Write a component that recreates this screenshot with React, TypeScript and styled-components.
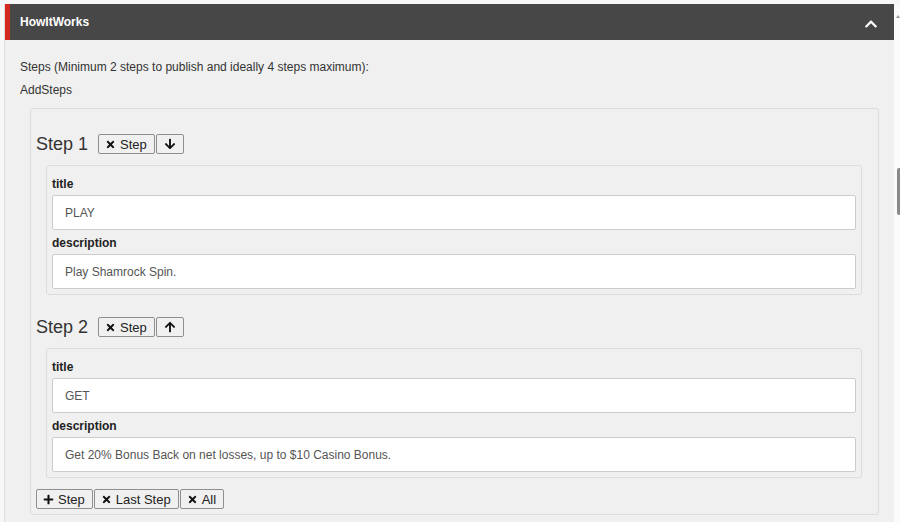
import React from "react";
import styled, { createGlobalStyle } from "styled-components";
import { FaTimes, FaArrowDown, FaArrowUp, FaPlus, FaChevronUp } from "react-icons/fa";

const Global = createGlobalStyle`
  html, body { margin: 0; padding: 0; background: #f7f7f7; }
  body { font-family: "Liberation Sans", Arial, sans-serif; font-size: 12px; color: #333; }
  * { box-sizing: border-box; }
`;

const Page = styled.div`
  display: flex;
  height: 522px;
  overflow: hidden;
  padding: 4px 0 0 4px;
`;

const Panel = styled.section`
  flex: 1;
  background: #f0f0f0;
  border-left: 1px solid #dedede;
  display: flex;
  flex-direction: column;
`;

const Header = styled.header`
  height: 36px;
  flex: none;
  background: #474747;
  border-left: 5px solid #d4271d;
  display: flex;
  align-items: center;
  justify-content: space-between;
  padding: 0 16px 0 10px;
  color: #fff;
  font-weight: bold;
  font-size: 12px;
`;

const Toggle = styled.span`
  display: flex;
  align-items: center;
  font-size: 14px;
  margin-top: 3px;
`;

const Gutter = styled.div`
  width: 6px;
  flex: none;
  background: #fbfbfb;
  display: flex;
  flex-direction: column;
  align-items: flex-end;
`;

const ArrowUp = styled.div`
  width: 0;
  height: 0;
  margin-top: 11px;
  border-left: 2px solid transparent;
  border-right: 2px solid transparent;
  border-bottom: 3px solid #9a9a9a;
`;

const Thumb = styled.div`
  width: 3px;
  height: 47px;
  margin-top: 150px;
  background: #8a8a8a;
  border-radius: 2px 0 0 2px;
`;

const Body = styled.div`
  padding: 19px 15px 0 15px;
`;

const Line = styled.div`
  line-height: 17px;
  margin-bottom: 6px;
  color: #333;
  & + & { margin-bottom: 5px; }
`;

const StepsBox = styled.div`
  margin-left: 10px;
  margin-top: 9px;
  border: 1px solid #dcdcdc;
  border-radius: 3px;
  padding: 3px 16px 5px 5px;
`;

const StepHead = styled.div`
  display: flex;
  align-items: center;
  height: 20px;
  margin-top: 22px;
  margin-bottom: 11px;
`;

const StepTitle = styled.h3`
  margin: 0 10px 0 0;
  font-size: 18px;
  font-weight: normal;
  color: #333;
  line-height: 20px;
`;

const BtnGroup = styled.div`
  display: flex;
  gap: 1px;
`;

const Btn = styled.button<{ $square?: boolean }>`
  height: 20px;
  display: inline-flex;
  align-items: center;
  justify-content: center;
  gap: 4px;
  padding: ${(p) => (p.$square ? "0" : "0 7px 0 6px")};
  width: ${(p) => (p.$square ? "28px" : "auto")};
  background: #f0f0f0;
  border: 1px solid #8f8f8f;
  border-radius: 2px;
  font-family: "Liberation Sans", Arial, sans-serif;
  font-size: 13px;
  color: #222;
  cursor: pointer;
  svg { font-size: ${(p) => (p.$square ? "12px" : "11px")}; color: #111; }
`;

const Fieldset = styled.div`
  margin-left: 10px;
  border: 1px solid #dcdcdc;
  border-radius: 3px;
  padding: 10px 5px 5px 5px;
`;

const Label = styled.label`
  display: block;
  font-weight: bold;
  line-height: 16px;
  margin-bottom: 3px;
  color: #222;
`;

const Input = styled.input`
  display: block;
  width: 100%;
  height: 35px;
  padding: 0 12px;
  border: 1px solid #cccccc;
  border-radius: 2px;
  background: #fff;
  font-family: "Liberation Sans", Arial, sans-serif;
  font-size: 12px;
  color: #555;
  margin-bottom: 5px;
  &:last-child { margin-bottom: 0; }
`;

const Footer = styled.div`
  display: flex;
  gap: 1px;
  margin-top: 11px;
`;

type Step = { title: string; description: string };

const steps: Step[] = [
  { title: "PLAY", description: "Play Shamrock Spin." },
  { title: "GET", description: "Get 20% Bonus Back on net losses, up to $10 Casino Bonus." },
];

export default function App() {
  return (
    <>
      <Global />
      <Page>
        <Panel>
          <Header>
            <span>HowItWorks</span>
            <Toggle>
              <FaChevronUp />
            </Toggle>
          </Header>
          <Body>
            <Line>Steps (Minimum 2 steps to publish and ideally 4 steps maximum):</Line>
            <Line>AddSteps</Line>
            <StepsBox>
              {steps.map((s, i) => (
                <div key={i}>
                  <StepHead>
                    <StepTitle>Step {i + 1}</StepTitle>
                    <BtnGroup>
                      <Btn>
                        <FaTimes /> Step
                      </Btn>
                      <Btn $square>{i === 0 ? <FaArrowDown /> : <FaArrowUp />}</Btn>
                    </BtnGroup>
                  </StepHead>
                  <Fieldset>
                    <Label>title</Label>
                    <Input defaultValue={s.title} readOnly />
                    <Label>description</Label>
                    <Input defaultValue={s.description} readOnly />
                  </Fieldset>
                </div>
              ))}
              <Footer>
                <Btn>
                  <FaPlus /> Step
                </Btn>
                <Btn>
                  <FaTimes /> Last Step
                </Btn>
                <Btn>
                  <FaTimes /> All
                </Btn>
              </Footer>
            </StepsBox>
          </Body>
        </Panel>
        <Gutter>
          <ArrowUp />
          <Thumb />
        </Gutter>
      </Page>
    </>
  );
}
